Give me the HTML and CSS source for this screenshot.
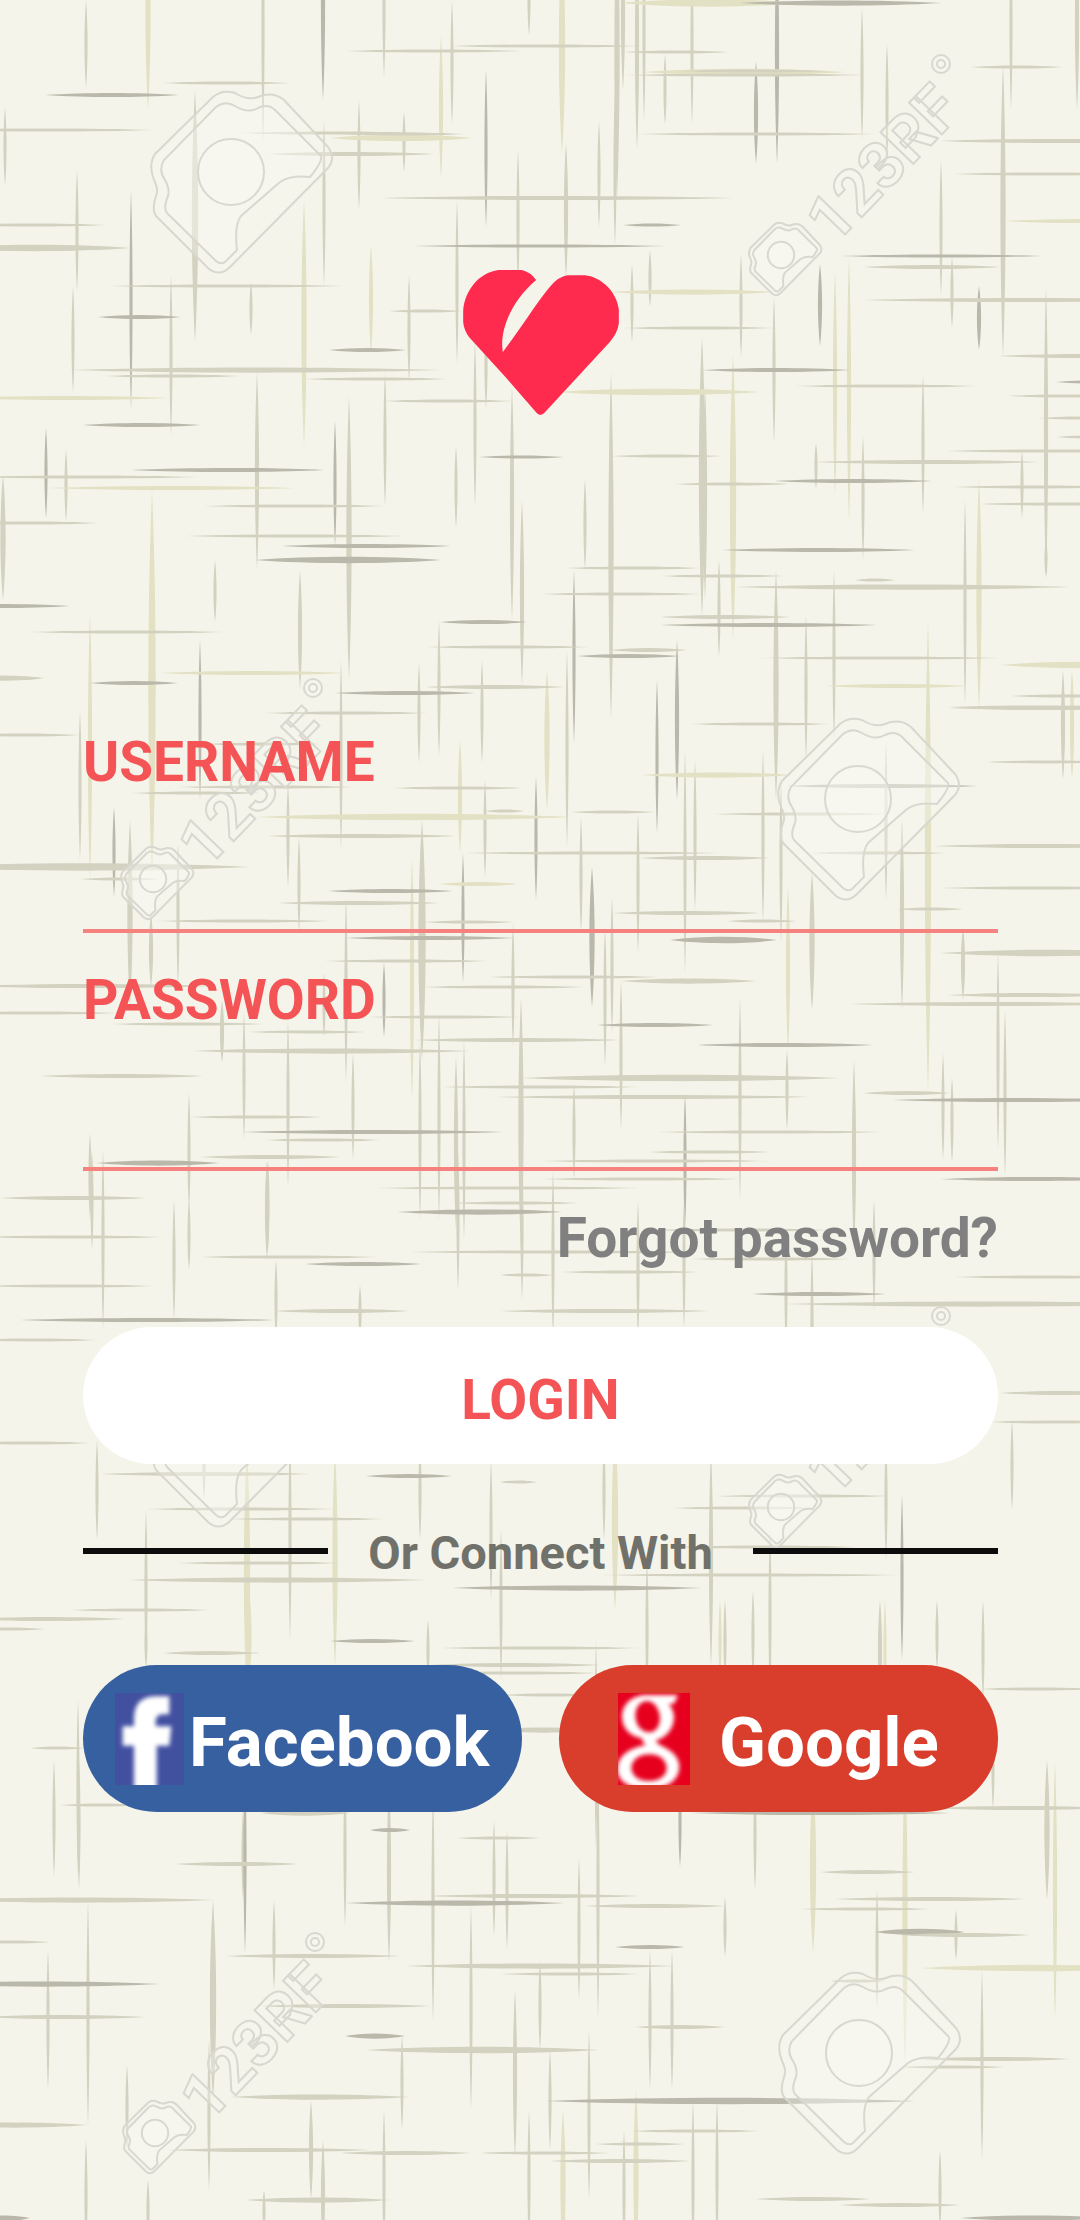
FILE: index.html
```html
<!DOCTYPE html>
<html lang="en">
<head>
<meta charset="utf-8">
<meta name="viewport" content="width=device-width, initial-scale=1">
<title>Login</title>
<link rel="stylesheet" href="styles.css">
</head>
<body>
<svg class="backdrop" viewBox="0 0 1080 2220" preserveAspectRatio="xMidYMin slice" aria-hidden="true">
  <defs>
    <filter id="weave-soft"><feGaussianBlur stdDeviation=".7"/></filter>
    <g id="camera" class="mark">
      <path d="M213 97Q222 89 235 93Q248 101 258 97Q273 91 284 100L328 147Q336 158 328 168L230 267Q220 277 209 269L157 217Q151 211 156 196Q159 190 154 180Q148 165 155 154Z"/>
      <path d="M216 107Q225 100 235 106Q248 114 258 108Q268 103 275 110L321 156Q323 161 310 177Q290 175 280 182L241 216Q234 225 237 250L225 262Q221 265 216 261L167 213Q163 208 168 196Q170 189 165 180Q158 170 164 160Z"/>
      <circle cx="231" cy="172" r="33"/>
    </g>
    <g id="brand" class="mark">
      <use href="#camera" transform="translate(781 255) scale(.4) translate(-231 -172)"/>
      <text class="mark-text" transform="translate(834 246) rotate(-46)">123RF</text>
      <circle cx="941" cy="64" r="9"/>
      <circle cx="941" cy="64" r="4"/>
    </g>
  </defs>
  <g id="threads" filter="url(#weave-soft)"></g>
  <use href="#camera"/>
  <use href="#camera" x="627" y="627"/>
  <use href="#camera" y="1254"/>
  <use href="#camera" x="628" y="1881"/>
  <use href="#brand"/>
  <use href="#brand" x="-628" y="624"/>
  <use href="#brand" y="1252"/>
  <use href="#brand" x="-626" y="1878"/>
</svg>

<main class="screen">
  <svg class="logo" viewBox="66 62 467 438" role="img" aria-label="Heart">
    <path d="M285 92Q268 68 242 62H172C112 70 70 125 66 185V218Q68 242 84 264L190 380L284 488Q297 506 312 488L506 278Q530 250 533 222V180C525 122 475 82 432 78H380Q358 82 342 96Q318 118 262 200Q215 268 185 308C174 245 210 155 285 92Z"/>
  </svg>

  <form class="form">
    <div class="field">
      <label class="text" for="username">USERNAME</label>
      <input class="input" id="username" type="text" autocomplete="username">
    </div>
    <div class="field">
      <label class="text" for="password">PASSWORD</label>
      <input class="input" id="password" type="password" autocomplete="current-password">
    </div>
    <a class="text forgot" href="#">Forgot password?</a>
    <button class="text login" type="submit">LOGIN</button>
  </form>

  <div class="divider"><span class="divider-text">Or Connect With</span></div>

  <div class="social">
    <button class="provider facebook" type="button">
      <svg class="icon icon-f" viewBox="135 132 207 276" aria-hidden="true">
        <defs><filter id="soft"><feGaussianBlur stdDeviation="6"/></filter></defs>
        <path filter="url(#soft)" d="M192 430V290H158V232H192V205Q194 142 260 142H298V196H276Q257 198 257 218V232H304L298 290H260V430Z"/>
      </svg>
      <span class="name">Facebook</span>
    </button>
    <button class="provider google" type="button">
      <svg class="icon icon-g" viewBox="234 132 216 276" aria-hidden="true">
        <g filter="url(#soft)">
          <path fill-rule="evenodd" d="M322 138H414L402 164H386Q402 184 402 206C400 244 374 268 347 274Q352 286 372 294Q416 316 418 352C418 396 378 420 322 420C268 420 232 396 232 360C234 318 272 296 318 288Q306 280 306 268C268 262 246 236 246 202C248 162 280 138 322 138ZM320 156C298 158 286 176 286 202C288 232 306 250 328 250C350 248 360 230 360 206C358 178 342 156 320 156ZM328 316C296 316 274 334 274 358C276 382 296 396 328 396C360 396 380 380 380 358C380 334 360 316 328 316Z"/>
        </g>
      </svg>
      <span class="name">Google</span>
    </button>
  </div>
</main>
<script src="script.js"></script>
</body>
</html>
```
FILE: styles.css
```css
* {
  box-sizing: border-box;
}

body {
  margin: 0;
  position: relative;
  min-height: 100vh;
  overflow-x: hidden;
  background: #f5f4ea;
  font-family: Roboto, "Liberation Sans", sans-serif;
  font-weight: 700;
}

.backdrop {
  position: absolute;
  inset: 0;
  width: 100%;
  height: 100%;
}

.thread-gray { fill: #d3d1bf; }
.thread-dark { fill: #b9b8aa; }
.thread-sand { fill: #e3e1c3; }

.mark {
  fill: rgba(250, 250, 243, 0.3);
  stroke: #d8d7d0;
  stroke-width: 2;
}

.mark path,
.mark circle {
  vector-effect: non-scaling-stroke;
}

.mark-text {
  font-size: 64px;
}

.screen {
  position: relative;
  display: flex;
  flex-direction: column;
  padding: 270px 82px 100px 83px;
}

.logo {
  align-self: center;
  width: 156px;
  height: 146px;
  margin-bottom: 314px;
  fill: #ff2b4f;
}

.form {
  display: flex;
  flex-direction: column;
  gap: 35px;
}

.field {
  display: flex;
  flex-direction: column;
}

.text {
  font: inherit;
  font-size: 55px;
  line-height: 64px;
  color: #f55456;
}

.input {
  width: 100%;
  height: 139px;
  padding: 0;
  border: 0;
  border-bottom: 4px solid #f6827f;
  background: transparent;
  font: inherit;
  font-size: 55px;
  color: #555;
  outline: none;
}

.forgot {
  align-self: flex-end;
  color: #808080;
  text-decoration: none;
}

.login {
  height: 137px;
  margin-top: 22px;
  padding: 8px 0 0;
  border: 0;
  border-radius: 69px;
  background: #fff;
}

.divider {
  display: flex;
  align-items: center;
  gap: 40px;
  margin: 58px 0 85px;
  font-size: 47px;
  line-height: 54px;
  color: #70716a;
}

.divider-text {
  padding-top: 4px;
}

.divider::before,
.divider::after {
  content: "";
  flex: 1;
  height: 6px;
  background: #0c0c0c;
}

.social {
  display: grid;
  grid-template-columns: 1fr 1fr;
  gap: 37px;
}

.provider {
  display: flex;
  align-items: center;
  height: 147px;
  border: 0;
  border-radius: 74px;
  font: inherit;
  font-size: 69px;
  line-height: 81px;
  color: #fff;
}

.name {
  padding-top: 8px;
}

.facebook {
  gap: 5px;
  padding: 0 32px;
  background: #3760a0;
}

.google {
  gap: 29px;
  padding: 0 59px;
  background: #d93d2b;
}

.icon {
  flex: none;
  height: 92px;
  fill: #fff;
}

.icon-f {
  width: 69px;
  background: #4250a0;
}

.icon-g {
  width: 72px;
  background: #e6001e;
}
```
FILE: script.js
```js
// Woven backdrop: each thread is a long sliver that tapers at both ends.
// Entries are "position,start,end[,width][,tone]"; tone is d (dark) or s (sand).
const vertical = `
86,0,88 148,-90,110,5,s 263,-90,146 323,-90,100,4,d 384,-60,78 452,0,125 529,-40,36 441,36,178,4,s
486,70,227,3,d 5,107,186 359,100,210 404,112,172 77,170,292 195,90,342,6 131,190,410,3,d 73,286,393
171,275,436 251,282,335 304,200,446,5,s 324,120,286 371,245,354,4,s 409,275,382 457,200,364 518,150,286
257,372,570,4 385,372,507 46,428,518,3,d 66,450,521 335,421,546,3,d 349,396,680,5 456,446,528
475,340,507 512,386,620,4 486,322,409 152,490,880,7,s 3,475,600,5
562,-60,154,6,s 566,143,278,4 599,121,228 617,-90,200,5 615,90,246 623,-60,90,4 637,-60,150,4 644,-60,121
665,54,125 692,-40,125 756,61,164,4,d 777,-60,164,4,d 862,7,140 887,43,160 941,160,296 1011,-60,110
1003,64,357,5 1077,-60,110,4 650,250,307 632,264,343 741,254,357 774,296,443 820,264,346,4,d
835,271,496,4,s 849,257,521,4,s 952,257,328 979,286,350,4,d 1046,286,580,4 611,371,720,5 702,336,617,6
705,386,600,4 733,354,640,6,s 816,443,489 863,436,560 923,375,514 1022,450,518 585,479,570 965,500,705
979,479,710,5,s
90,613,880,4,s 80,710,860 200,640,800,3,d 114,807,897,3,d 130,820,1007,5 151,913,987,4 178,843,987
288,783,887 299,837,933 341,660,850 419,663,763 439,620,757 485,780,877 460,740,853,4,s 463,853,983,3,d
422,820,1060,7 536,777,900,3,d 547,670,810,5,s 567,650,847 574,570,743,3,d 581,817,933 592,867,1007,5,d
605,927,1067 346,897,1083 412,857,1100,4,s 513,923,1047 384,963,1037,3,d 324,973,1037 244,1013,1140
288,1020,1187 222,1000,1063,4 353,1053,1160 189,1093,1210 420,1040,1220 439,1013,1220 456,1057,1230,4
464,1040,1240 521,997,1250,5 574,1083,1180 90,1133,1220 267,1160,1260,4 215,560,622 300,570,690,4
522,500,685,4 482,660,763 719,560,657 776,570,800,5 806,615,760 834,570,740 1046,540,577
1063,670,780,4 1072,670,780,4,s
657,680,833,3,d 677,640,800,4,d 685,750,973 695,760,910 763,750,923 781,780,943 886,740,900
928,620,1093,6,s 902,817,1010,4 812,873,1010,5 788,887,1050,4,s 787,1050,1130 638,813,953 612,897,1033
621,980,1130 740,997,1200 854,1060,1250,4 943,1053,1160 952,1077,1163 998,953,1150 1005,1010,1177
963,927,1000,4 685,1093,1230,3,d
92,1150,1250 103,1150,1330 174,1200,1320 189,1200,1270 268,1160,1250 276,1260,1340 360,1285,1340
458,1150,1290 522,1160,1300 553,1170,1340 638,1200,1340 684,1200,1328 786,1230,1350 812,1250,1400
874,1200,1310 97,1440,1540 146,1510,1667 204,1430,1500 247,1450,1700,6,s 290,1430,1640 335,1450,1667,5,s
420,1440,1540 491,1460,1600 501,1530,1680 604,1440,1540 615,1430,1610,6,s 711,1450,1667,4 770,1530,1700
886,1440,1560 902,1495,1660,3,d 1012,1420,1510 146,1620,1667 249,1590,1680,5,s 428,1620,1680 78,1700,1877
243,1810,1900 345,1770,1927 389,1780,1963,4 433,1790,2023 647,1560,1700 720,1600,1680,3,s 725,1600,1680
753,1590,1680 880,1600,1700,4 885,1600,1700,3,s 937,1600,1670 983,1600,1700 993,1720,1810 596,1640,1850
680,1780,1867,3,d 813,1780,1953,6,s
54,1760,1877 79,1760,1890 245,1760,1953,3,d 494,1820,1937 507,1830,1950 579,1857,2000 598,1760,2020
755,1780,1890 905,1760,2067,5,s 877,1890,2010 956,1910,1960 1047,1760,1900,5 1055,1760,2020,4,s 725,1897,1957
88,1900,2127 213,1900,2100,6 274,1900,1990 48,1950,2090 471,1905,2110 540,1960,2050 650,1950,2090
672,1950,2090 515,1990,2157,4 589,2030,2200 550,2050,2150 402,2035,2130 209,2040,2190 127,2065,2150
311,2100,2200,4 323,2140,2250,4 384,2110,2250 86,2140,2250 529,2110,2250 563,2110,2260,5,s 624,2130,2250
636,2090,2260,5,s 693,2100,2260 717,2100,2250 982,1970,2160 940,2150,2230 264,2190,2230 148,2180,2240`;

const horizontal = `
95,45,179,4,d 83,162,290 51,344,523 46,451,640 130,-60,155 133,240,424 138,330,472,6,s 134,340,465
154,268,434,4 198,382,733,4 225,-40,107 248,-60,131,6 246,413,667,3,d 286,107,344 311,389,462
317,98,181,4,d 350,329,406,4,d 370,69,441,5 376,103,241 379,303,448 398,-40,169,4,s 425,83,200,4,d
401,382,513 470,131,324,4,d 477,-40,200 488,48,296,4,s 457,479,564,3,d 506,203,386 523,-40,100
536,186,406 546,282,451,4,d
3,620,800,7,s 3,740,942,5,d 52,623,729 72,643,846,6,s 71,680,830 75,623,867 134,636,877 67,970,1063
141,939,1180,4 174,953,1140 221,1004,1180,4,s 225,623,681,3,d 256,839,1042,3,d 267,863,1001,4
292,609,774,5,s 300,863,1180,4 328,623,774 370,702,850,4,d 392,557,760,6,s 386,795,977 356,997,1180,4
382,1056,1120,3,d 396,1008,1120 418,1039,1120 437,1056,1130 456,611,722 462,815,1039,4 451,946,1150
484,674,788 481,774,932,4,d 487,953,1120 504,980,1140 550,722,915,4,d
560,255,441,6,d 606,-70,70,4,d 632,28,225 673,160,345,4,s 683,90,178,4,d 693,335,475,4,d 622,440,527,4,d
647,425,590 687,425,565,4 678,-40,45,5 568,565,702 576,660,785 587,735,1070,5 594,540,702 617,660,790,4
625,660,877,4,d 650,610,687,4 656,577,680,4,d 658,760,1000 686,825,967,4,s 665,1000,1160,6,s
696,1010,1120 708,950,1130,4 580,855,895
713,264,428 744,203,321 735,-30,80 787,178,356 793,131,260 788,392,521 817,256,571,6,s 811,485,524
812,571,655 836,267,456,4 853,464,720 867,-90,250,7 879,80,160 891,328,453,4,d 884,439,517,4,s
903,278,439,4 921,156,331 922,424,513 938,346,514,4,d 961,324,489 977,489,660 981,620,757,5
987,421,585 986,-30,214,4 1017,367,520 1024,110,264 1013,-50,120 1032,249,367 1040,414,620,4
1051,192,471,5 1076,40,203,4 1078,521,840,6 1087,442,640 1097,496,810,4 1117,189,324 1132,242,503,4,d
1140,264,381 1157,200,340,4 1163,96,220,5,d 1161,540,770 1179,540,742 1188,374,640 1198,0,146,4
724,690,830 775,640,793,5,s 786,787,977,4,d 814,713,890 858,640,770,4 853,807,947 846,933,1150,4
762,987,1110 707,947,1130 888,940,1130 909,897,963 913,613,760,4 921,727,797 940,670,777,6,d
953,940,1150,6 995,947,1110,4 1004,850,1130,4 1025,597,713,4,d 1045,697,873,4,d 1093,863,950,4
1100,893,1130,4,d 1132,657,883 1152,647,770 1179,940,1130,4,d
1212,397,562,5,d 1203,452,580 1237,-20,164 1257,200,378 1264,305,421,4,d 1286,-20,155 1311,274,409,4
1320,20,274,4,d 1275,500,553 1272,560,700 1311,500,709,4 1252,409,700 1230,650,830 1259,690,850
1294,752,886,4,d 1304,782,1180,5 1277,955,1120 1474,100,310,4 1476,366,452,4,d 1482,500,537
1496,715,892 1508,672,813 1509,146,335 1519,230,384 1563,176,341 1580,127,427,5 1588,452,702,5,d
1575,600,900 1547,672,860 1340,-30,97 1443,-30,90 1393,1000,1120,4 1422,990,1120
1610,70,210 1619,-30,125,4 1629,-30,45 1641,330,415,4,d 1653,163,260,4 1648,440,640 1665,430,600,4
1673,430,600 1695,500,600 1730,490,600,5 1748,30,84 1805,60,140 1813,260,350,5 1808,930,1110,4
1689,980,1100 1813,690,950,4,d
1830,370,410,4,d 1838,457,540 1864,175,298,4 1900,-60,215,5 1896,430,640,4 1903,345,565,5,d
1906,585,725,4 1872,820,915,4 1899,835,1025,4 1909,800,930 1932,875,965,6,d 1935,900,1030,4
1947,615,685,4,d 1956,225,400,4 1966,405,675,5 1974,500,640 1968,920,1150,6,s 1942,-30,50
1984,-70,160,5,d 2017,-20,145,4 2006,260,430,4 1981,830,885 2027,635,725,4 2036,345,405,5,d
2050,365,600,6 2059,920,1070,4 2067,900,1005 2097,230,410,5 2101,545,915,6,d 2125,-60,88,5
2131,630,760 2144,595,685 2150,165,370,4 2153,340,470,4 2153,480,610 2161,550,690,4 2200,245,390,5
2199,755,870,4 2205,840,960,4 2218,-20,30,5,d 2218,960,1110,5,d`;

const tones = { d: "thread-dark", s: "thread-sand" };
const layer = document.getElementById("threads");

function weave(list, isVertical) {
  for (const entry of list.trim().split(/\s+/)) {
    const [pos, start, end, width = 3, tone] = entry.split(",");
    const p = +pos, a = +start, b = +end, w = +width;
    const q = (b - a) * 0.3;
    const point = (along, across) => (isVertical ? `${across} ${along}` : `${along} ${across}`);
    const path = document.createElementNS("http://www.w3.org/2000/svg", "path");
    path.setAttribute("class", tones[tone] || "thread-gray");
    path.setAttribute("d",
      `M${point(a, p)}C${point(a + q, p - w * 0.7)} ${point(b - q, p - w * 0.7)} ${point(b, p)}` +
      `C${point(b - q, p + w * 0.7)} ${point(a + q, p + w * 0.7)} ${point(a, p)}Z`);
    layer.append(path);
  }
}

weave(vertical, true);
weave(horizontal, false);
```
